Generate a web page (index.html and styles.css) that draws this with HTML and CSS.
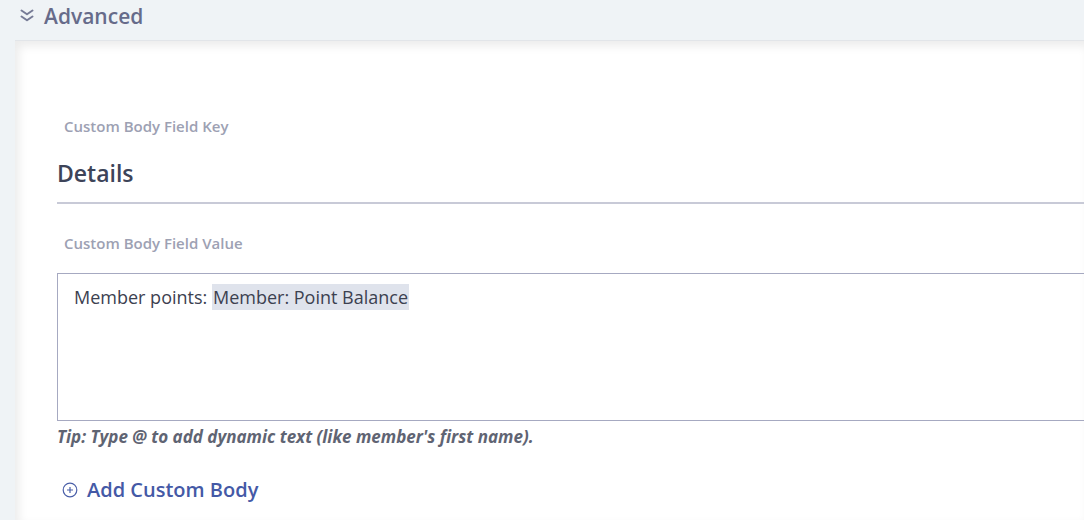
FILE: index.html
```html
<!DOCTYPE html>
<html>
<head>
<meta charset="utf-8">
<link rel="stylesheet" href="styles.css">
</head>
<body>
<div class="page">
  <div class="section-head">
    <svg class="chev" width="16" height="16" viewBox="0 0 16 16"><path d="M2.5 2.5 L8 6.3 L13.5 2.5 M2.5 8.5 L8 12.3 L13.5 8.5" fill="none" stroke="#767b96" stroke-width="2" stroke-linecap="round" stroke-linejoin="round"/></svg>
    <span class="head-title">Advanced</span>
  </div>
  <div class="panel">
    <div class="field-label key-label">Custom Body Field Key</div>
    <div class="key-input">Details</div>
    <div class="field-label value-label">Custom Body Field Value</div>
    <div class="textarea">Member points: <span class="tag">Member: Point Balance</span></div>
    <div class="tip">Tip: Type @ to add dynamic text (like member's first name).</div>
    <div class="add-link">
      <svg class="plus" width="16" height="16" viewBox="0 0 16 16"><circle cx="8" cy="8" r="6.8" fill="none" stroke="#4a5fa8" stroke-width="1.2"/><path d="M8 5 V11 M5 8 H11" stroke="#4a5fa8" stroke-width="1.2"/></svg>
      <span>Add Custom Body</span>
    </div>
  </div>
</div>
</body>
</html>
```

FILE: styles.css
```css
html, body {
  margin: 0;
  padding: 0;
  background: #ffffff;
  font-family: "Open Sans", "Noto Sans", sans-serif;
  overflow: hidden;
}
.page {
  width: 1084px;
  height: 520px;
  background: #eff3f6;
  display: flex;
  flex-direction: column;
}
.section-head {
  height: 40px;
  display: flex;
  align-items: center;
  padding-left: 19px;
  gap: 9px;
  box-sizing: border-box;
  padding-bottom: 8px;
}
.chev { display: block; }
.head-title {
  font-size: 21px;
  color: #666b8a;
  font-weight: 600;
  line-height: 28px;
}
.panel {
  flex: 1;
  margin-left: 15px;
  background: #ffffff;
  box-shadow: inset 4px 5px 10px rgba(0,0,0,0.08);
  border-top: 1px solid #e2e5e9;
  padding: 75px 0 0 49px;
  display: flex;
  flex-direction: column;
}
.field-label {
  font-size: 15px;
  color: #9da1b3;
  font-weight: 600;
  line-height: 20px;
}
.key-input {
  margin-left: -7px;
  margin-top: 22px;
  font-size: 23px;
  font-weight: 600;
  color: #3d4459;
  line-height: 30px;
  padding-bottom: 14px;
  border-bottom: 2px solid #c8cad7;
}
.value-label {
  margin-top: 29px;
}
.textarea {
  margin-left: -7px;
  margin-top: 20px;
  height: 148px;
  flex-shrink: 0;
  border: 1.5px solid #a6a9c1;
  border-right: none;
  padding: 11px 16px;
  box-sizing: border-box;
  font-size: 18px;
  color: #3c4150;
  line-height: 24px;
}
.tag {
  background: #dfe3ec;
  padding: 1px 1px;
}
.tip {
  margin-left: -7px;
  margin-top: 6px;
  font-size: 17px;
  font-style: italic;
  font-weight: 700;
  color: #5f6473;
  line-height: 20px;
}
.add-link {
  margin-left: -2px;
  margin-top: 29px;
  display: flex;
  align-items: center;
  gap: 9px;
  font-size: 20px;
  font-weight: 600;
  color: #4459a6;
  line-height: 28px;
}
.plus { display: block; }
```
